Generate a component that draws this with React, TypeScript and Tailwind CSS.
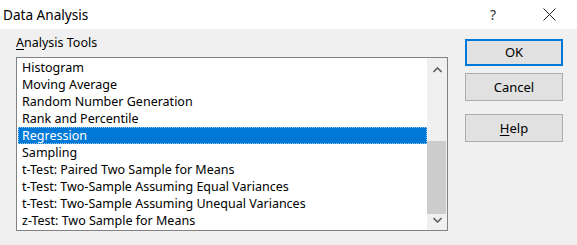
import React from "react";

const items = [
  "Histogram",
  "Moving Average",
  "Random Number Generation",
  "Rank and Percentile",
  "Regression",
  "Sampling",
  "t-Test: Paired Two Sample for Means",
  "t-Test: Two-Sample Assuming Equal Variances",
  "t-Test: Two-Sample Assuming Unequal Variances",
  "z-Test: Two Sample for Means",
];

export default function App() {
  return (
    <div
      className="w-[577px] h-[245px] overflow-hidden bg-[#f0f0f0] text-black"
      style={{ fontFamily: '"Segoe UI", "Noto Sans", "Open Sans", sans-serif' }}
    >
      <div className="h-[29px] bg-white flex items-center">
        <span className="pl-[3px] text-[13.6px] leading-none text-black">Data Analysis</span>
        <span className="ml-auto mr-[47px] text-[14px] leading-none text-[#333]">?</span>
        <svg width="13" height="13" viewBox="0 0 13 13" className="mr-[21px]">
          <path d="M0.5 0.5 L12.5 12.5 M12.5 0.5 L0.5 12.5" stroke="#222" strokeWidth="1" fill="none" />
        </svg>
      </div>
      <div className="flex pl-[16px]">
        <div className="w-[432px] flex flex-col">
          <div className="h-[28px] pt-[6px] text-[12.5px] leading-[16px]">
            <span className="underline underline-offset-2">A</span>nalysis Tools
          </div>
          <div className="h-[174px] border border-[#828282] bg-white flex">
            <div className="flex-1 pt-[1px] pl-[1px]">
              {items.map((t) => (
                <div
                  key={t}
                  className={
                    "h-[17px] text-[12.5px] whitespace-nowrap pt-[1px] " +
                    (t === "Regression"
                      ? "bg-[#0078d7] text-white border border-dotted border-[#9cc8ee] pl-[3px] leading-[14px]"
                      : "pl-[4px] leading-[16px]")
                  }
                >
                  {t}
                </div>
              ))}
            </div>
            <div className="w-[20px] bg-[#f0f0f0] flex flex-col">
              <div className="h-[24px] flex items-center justify-center">
                <svg width="9" height="6" viewBox="0 0 9 6">
                  <path d="M0.5 5 L4.5 1 L8.5 5" stroke="#606060" strokeWidth="1.6" fill="none" />
                </svg>
              </div>
              <div className="flex-1 pt-[59px]">
                <div className="h-[73px] w-[19px] bg-[#cdcdcd]" />
              </div>
              <div className="h-[15px] flex items-start justify-center pt-[2px]">
                <svg width="9" height="6" viewBox="0 0 9 6">
                  <path d="M0.5 1 L4.5 5 L8.5 1" stroke="#606060" strokeWidth="1.6" fill="none" />
                </svg>
              </div>
            </div>
          </div>
        </div>
        <div className="ml-[17px] pt-[10px] flex flex-col w-[98px]">
          <button className="h-[27px] border-2 border-[#0078d7] bg-[#e1e1e1] text-[13px] leading-none">
            OK
          </button>
          <button className="mt-[7px] h-[28px] border border-[#adadad] bg-[#e1e1e1] text-[13px] leading-none">
            Cancel
          </button>
          <button className="mt-[13px] h-[28px] border border-[#adadad] bg-[#e1e1e1] text-[13px] leading-none">
            <span className="underline underline-offset-2">H</span>elp
          </button>
        </div>
      </div>
    </div>
  );
}
